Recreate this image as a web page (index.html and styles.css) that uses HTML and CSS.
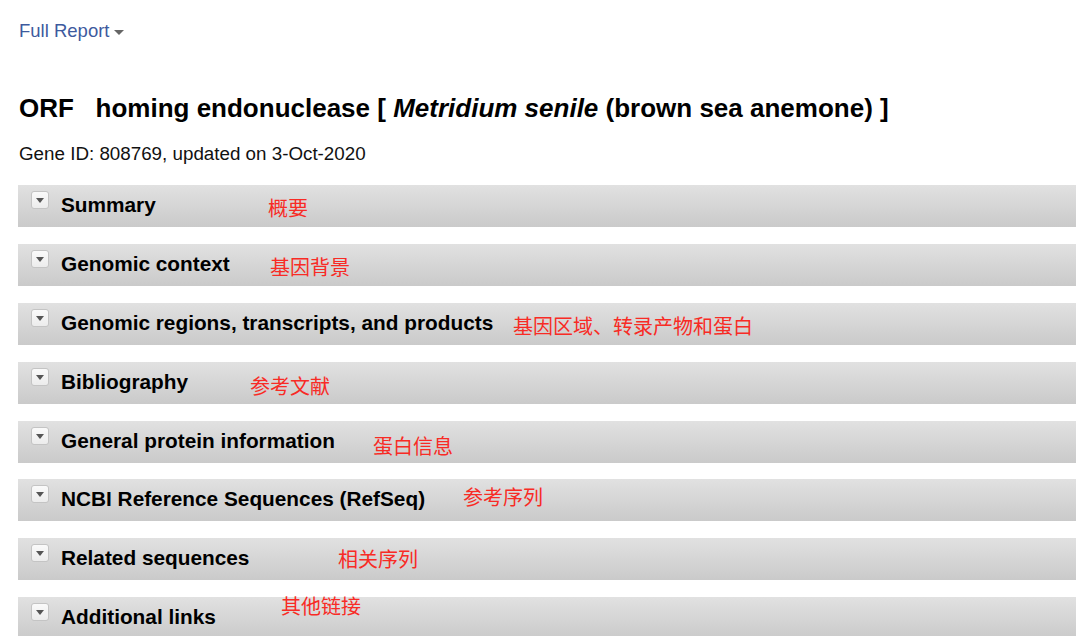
FILE: index.html
```html
<!DOCTYPE html>
<html lang="en">
<head>
    <meta charset="UTF-8">
    <title>ORF homing endonuclease - Gene</title>
    <link rel="stylesheet" href="styles.css">
</head>
<body>

    <div class="report-menu">
        <a href="#" class="report-link">Full Report</a><span class="caret"></span>
    </div>

    <h1 class="gene-title">ORF&nbsp;&nbsp; homing endonuclease [ <em>Metridium senile</em> (brown sea anemone) ]</h1>
    <p class="gene-id">Gene ID: 808769, updated on 3-Oct-2020</p>

    <!-- 各个折叠区块 -->
    <div class="section">
        <span class="toggle"></span><span class="section-title">Summary</span>
        <span class="note note-summary">概要</span>
    </div>
    <div class="section">
        <span class="toggle"></span><span class="section-title">Genomic context</span>
        <span class="note note-context">基因背景</span>
    </div>
    <div class="section">
        <span class="toggle"></span><span class="section-title">Genomic regions, transcripts, and products</span>
        <span class="note note-regions">基因区域、转录产物和蛋白</span>
    </div>
    <div class="section">
        <span class="toggle"></span><span class="section-title">Bibliography</span>
        <span class="note note-biblio">参考文献</span>
    </div>
    <div class="section">
        <span class="toggle"></span><span class="section-title">General protein information</span>
        <span class="note note-protein">蛋白信息</span>
    </div>
    <div class="section">
        <span class="toggle"></span><span class="section-title">NCBI Reference Sequences (RefSeq)</span>
        <span class="note note-refseq">参考序列</span>
    </div>
    <div class="section">
        <span class="toggle"></span><span class="section-title">Related sequences</span>
        <span class="note note-related">相关序列</span>
    </div>
    <div class="section">
        <span class="toggle"></span><span class="section-title">Additional links</span>
        <span class="note note-links">其他链接</span>
    </div>

</body>
</html>
```

FILE: styles.css
```css
body {
    margin: 0;
    padding: 0 4px 0 18px;
    font-family: "Liberation Sans", Arial, sans-serif;
    color: #000;
    background-color: #fff;
    overflow: hidden;
}
.report-menu {
    padding-top: 19px;
    height: 24px;
    display: flex;
    align-items: center;
    padding-left: 1px;
}
.report-link {
    color: #3d5a9e;
    font-size: 18.5px;
    text-decoration: none;
}
.caret {
    display: inline-block;
    margin-left: 5px;
    margin-top: 3px;
    border-left: 5px solid transparent;
    border-right: 5px solid transparent;
    border-top: 5px solid #666;
}
.gene-title {
    margin: 50px 0 0 1px;
    font-size: 26px;
    line-height: 30px;
    font-weight: bold;
}
.gene-title em {
    font-style: italic;
}
.gene-id {
    margin: 20px 0 20px 1px;
    font-size: 18.8px;
    line-height: 22px;
    color: #111;
}
.section {
    position: relative;
    display: flex;
    align-items: flex-start;
    height: 42px;
    margin-bottom: 16.9px;
    background: linear-gradient(to bottom, #e1e1e1, #cacaca);
    box-sizing: border-box;
    padding: 6px 0 0 13px;
}
.toggle {
    position: relative;
    width: 16px;
    height: 16px;
    border: 1px solid #c4c4c4;
    border-radius: 3px;
    background: linear-gradient(to bottom, #fafafa, #ececec);
    flex-shrink: 0;
}
.toggle::after {
    content: "";
    position: absolute;
    left: 4px;
    top: 6px;
    border-left: 4px solid transparent;
    border-right: 4px solid transparent;
    border-top: 5px solid #555;
}
.section-title {
    margin-left: 12px;
    font-size: 20.8px;
    font-weight: bold;
    line-height: 26px;
    margin-top: 1px;
}
/* 红色中文注释 */
.note {
    position: absolute;
    color: #f82b25;
    font-family: "Noto Sans CJK SC", sans-serif;
    font-size: 20px;
    line-height: 24px;
    font-weight: 400;
}
.note-summary { left: 250px; top: 11px; }
.note-context { left: 252px; top: 11px; }
.note-regions { left: 495px; top: 11px; }
.note-biblio { left: 232px; top: 12px; }
.note-protein { left: 355px; top: 13px; }
.note-refseq { left: 445px; top: 6px; }
.note-related { left: 320px; top: 9px; }
.note-links { left: 263px; top: -3px; }
```
